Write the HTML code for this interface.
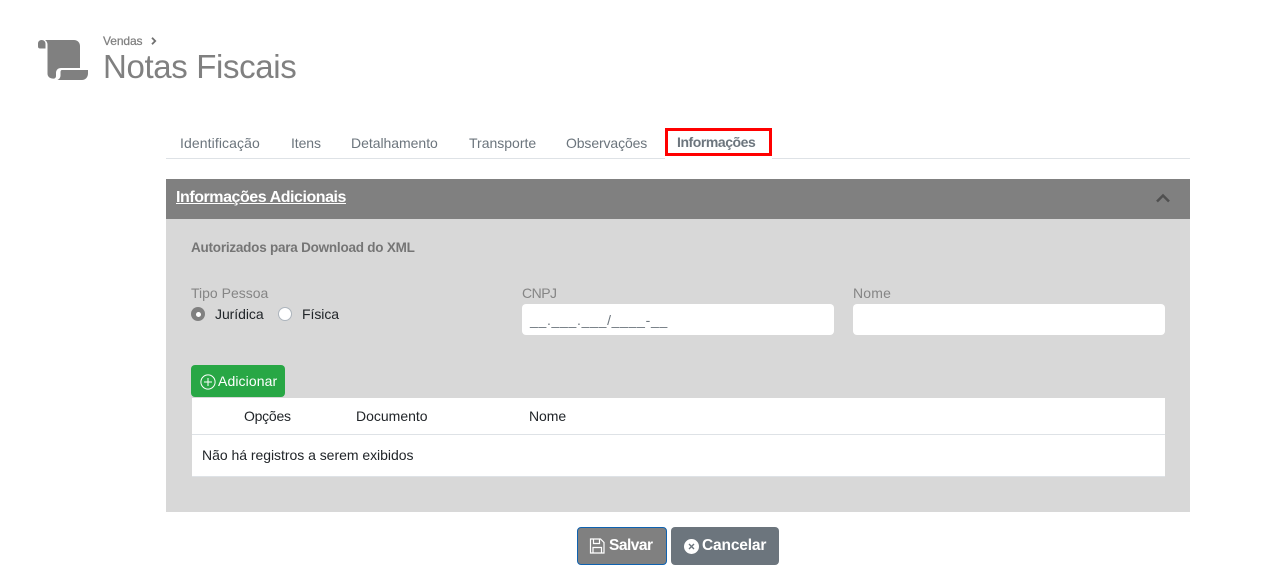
<!DOCTYPE html>
<html lang="pt"><head><meta charset="utf-8"><title>Notas Fiscais</title>
<style>
html,body{margin:0;padding:0;background:#fff;width:1280px;height:579px;overflow:hidden}
body{position:relative;font-family:"Liberation Sans",Arial,sans-serif;color:#212529}
.a{position:absolute;display:block}
.t{position:absolute;white-space:nowrap;line-height:20px;font-size:14px}
.tab{color:#6c757d;top:133px;}
.lab{color:#858585;top:283px;font-size:14px}
</style></head><body>

<svg class="a" style="left:37px;top:39px" width="52" height="42" viewBox="0 0 52 42">
<path fill="#808080" d="M1 4.5C1 2.5 2.5 1 4.5 1C7 1 8.5 2.5 8.5 5V9.5H3C1.8 9.5 1 8.7 1 7.5Z"/>
<path fill="#808080" d="M8 1H37C40.5 1 43 3.5 43 7V29H24C21 29 19 31 19 34V37C19 38 18.5 39 17.5 39.5C14 40 10.5 38.5 10.5 34.5V5.5C10.5 3.5 9.5 2 8 1Z"/>
<path fill="#808080" d="M25 31H51V34.5C51 38 48.5 41 45 41H20.5C22.5 40 23.5 38.5 23.5 36.5V33C23.5 32 24 31 25 31Z"/>
</svg>

<div class="t" style="left:103px;top:31px;font-size:12px;color:#808080;letter-spacing:-.1px;-webkit-text-stroke:.25px #808080">Vendas</div>
<svg class="a" style="left:151px;top:37px" width="6" height="8" viewBox="0 0 6 8"><path d="M1 .8 4.2 4 1 7.2" fill="none" stroke="#707070" stroke-width="1.8"/></svg>
<div class="t" style="left:103px;top:47px;font-size:33px;line-height:40px;color:#808080;letter-spacing:-.36px">Notas Fiscais</div>

<div class="a" style="left:166px;top:158px;width:1024px;height:1px;background:#dee2e6"></div>
<div class="t tab" style="left:180px;letter-spacing:.1px">Identificação</div>
<div class="t tab" style="left:291px;letter-spacing:-.1px">Itens</div>
<div class="t tab" style="left:351px;letter-spacing:-.03px">Detalhamento</div>
<div class="t tab" style="left:469px;letter-spacing:0">Transporte</div>
<div class="t tab" style="left:566px;letter-spacing:-.12px">Observações</div>
<div class="a" style="left:665px;top:128px;width:107px;height:28px;box-sizing:border-box;border:3px solid #f00;background:#fff"></div>
<div class="a" style="left:665px;top:156px;width:107px;height:3px;background:#fff"></div>
<div class="t" style="left:677px;top:132px;color:#6c757d;font-weight:bold;letter-spacing:-.45px">Informações</div>

<div class="a" style="left:166px;top:179px;width:1024px;height:333px;background:#d8d8d8"></div>
<div class="a" style="left:166px;top:179px;width:1024px;height:40px;background:#808080"></div>
<div class="t" style="left:176px;top:188px;font-size:16px;font-weight:bold;color:#fff;text-decoration:underline;letter-spacing:-.45px">Informações Adicionais</div>
<svg class="a" style="left:1155px;top:192px" width="16" height="12" viewBox="0 0 16 12"><path d="M2 9.5 8 3.5 14 9.5" fill="none" stroke="#505050" stroke-width="2.5"/></svg>

<div class="t" style="left:191px;top:238px;font-size:13.5px;font-weight:bold;color:#757575;letter-spacing:-.23px">Autorizados para Download do XML</div>

<div class="t lab" style="left:191px">Tipo Pessoa</div>
<div class="a" style="left:191px;top:307px;width:14px;height:14px;border-radius:50%;background:#808080"></div>
<div class="a" style="left:195.5px;top:311.5px;width:5px;height:5px;border-radius:50%;background:#fff"></div>
<div class="t" style="left:215px;top:304px;letter-spacing:-.05px">Jurídica</div>
<div class="a" style="left:278px;top:307px;width:14px;height:14px;box-sizing:border-box;border-radius:50%;background:#fff;border:1px solid #adb5bd"></div>
<div class="t" style="left:302px;top:304px;letter-spacing:-.05px">Física</div>

<div class="t lab" style="left:522px;letter-spacing:-.5px">CNPJ</div>
<div class="a" style="left:522px;top:304px;width:312px;height:31px;background:#fff;border-radius:4px"></div>
<div class="t" style="left:530px;top:310px;color:#6c757d;letter-spacing:.7px;font-size:14px">__.___.___/____-__</div>

<div class="t lab" style="left:853px;letter-spacing:.2px">Nome</div>
<div class="a" style="left:853px;top:304px;width:312px;height:31px;background:#fff;border-radius:4px"></div>

<div class="a" style="left:191px;top:365px;width:94px;height:32px;background:#28a745;border-radius:4px"></div>
<svg class="a" style="left:200px;top:374px" width="16" height="16" viewBox="0 0 16 16"><circle cx="8" cy="8" r="7.1" fill="none" stroke="#fff" stroke-width="1"/><path d="M8 4V12M4 8H12" stroke="#fff" stroke-width="1"/></svg>
<div class="t" style="left:218px;top:371px;color:#fff;letter-spacing:.1px">Adicionar</div>

<div class="a" style="left:192px;top:398px;width:973px;height:78px;background:#fff"></div>
<div class="a" style="left:192px;top:434px;width:973px;height:1px;background:#dee2e6"></div>
<div class="a" style="left:192px;top:476px;width:973px;height:1px;background:#dee2e6"></div>
<div class="t" style="left:244px;top:406px;letter-spacing:-.25px">Opções</div>
<div class="t" style="left:356px;top:406px;letter-spacing:0">Documento</div>
<div class="t" style="left:529px;top:406px;letter-spacing:-.05px">Nome</div>
<div class="t" style="left:202px;top:445px;letter-spacing:-.03px">Não há registros a serem exibidos</div>

<div class="a" style="left:577px;top:527px;width:90px;height:38px;box-sizing:border-box;background:#808080;border:1px solid #0f62b0;border-radius:4px"></div>
<svg class="a" style="left:589px;top:538px" width="16" height="16" viewBox="0 0 16 16"><path d="M1.5 1H11.5L15 4.5V15H1.5Z" fill="none" stroke="#fff" stroke-width="1.2"/><path d="M4.5 1.2V5.5H10.5V1.2M4 15V9.5H12.5V15" fill="none" stroke="#fff" stroke-width="1.2"/></svg>
<div class="t" style="left:609px;top:536px;font-size:15.5px;font-weight:bold;color:#fff;letter-spacing:-.5px">Salvar</div>

<div class="a" style="left:671px;top:527px;width:108px;height:38px;background:#6c757d;border-radius:4px"></div>
<svg class="a" style="left:684px;top:539px" width="15" height="15" viewBox="0 0 15 15"><circle cx="7.5" cy="7.5" r="7.5" fill="#fff"/><path d="M5 5 10 10M10 5 5 10" stroke="#6c757d" stroke-width="1.4"/></svg>
<div class="t" style="left:702px;top:536px;font-size:15.5px;font-weight:bold;color:#fff;letter-spacing:-.15px">Cancelar</div>

</body></html>
